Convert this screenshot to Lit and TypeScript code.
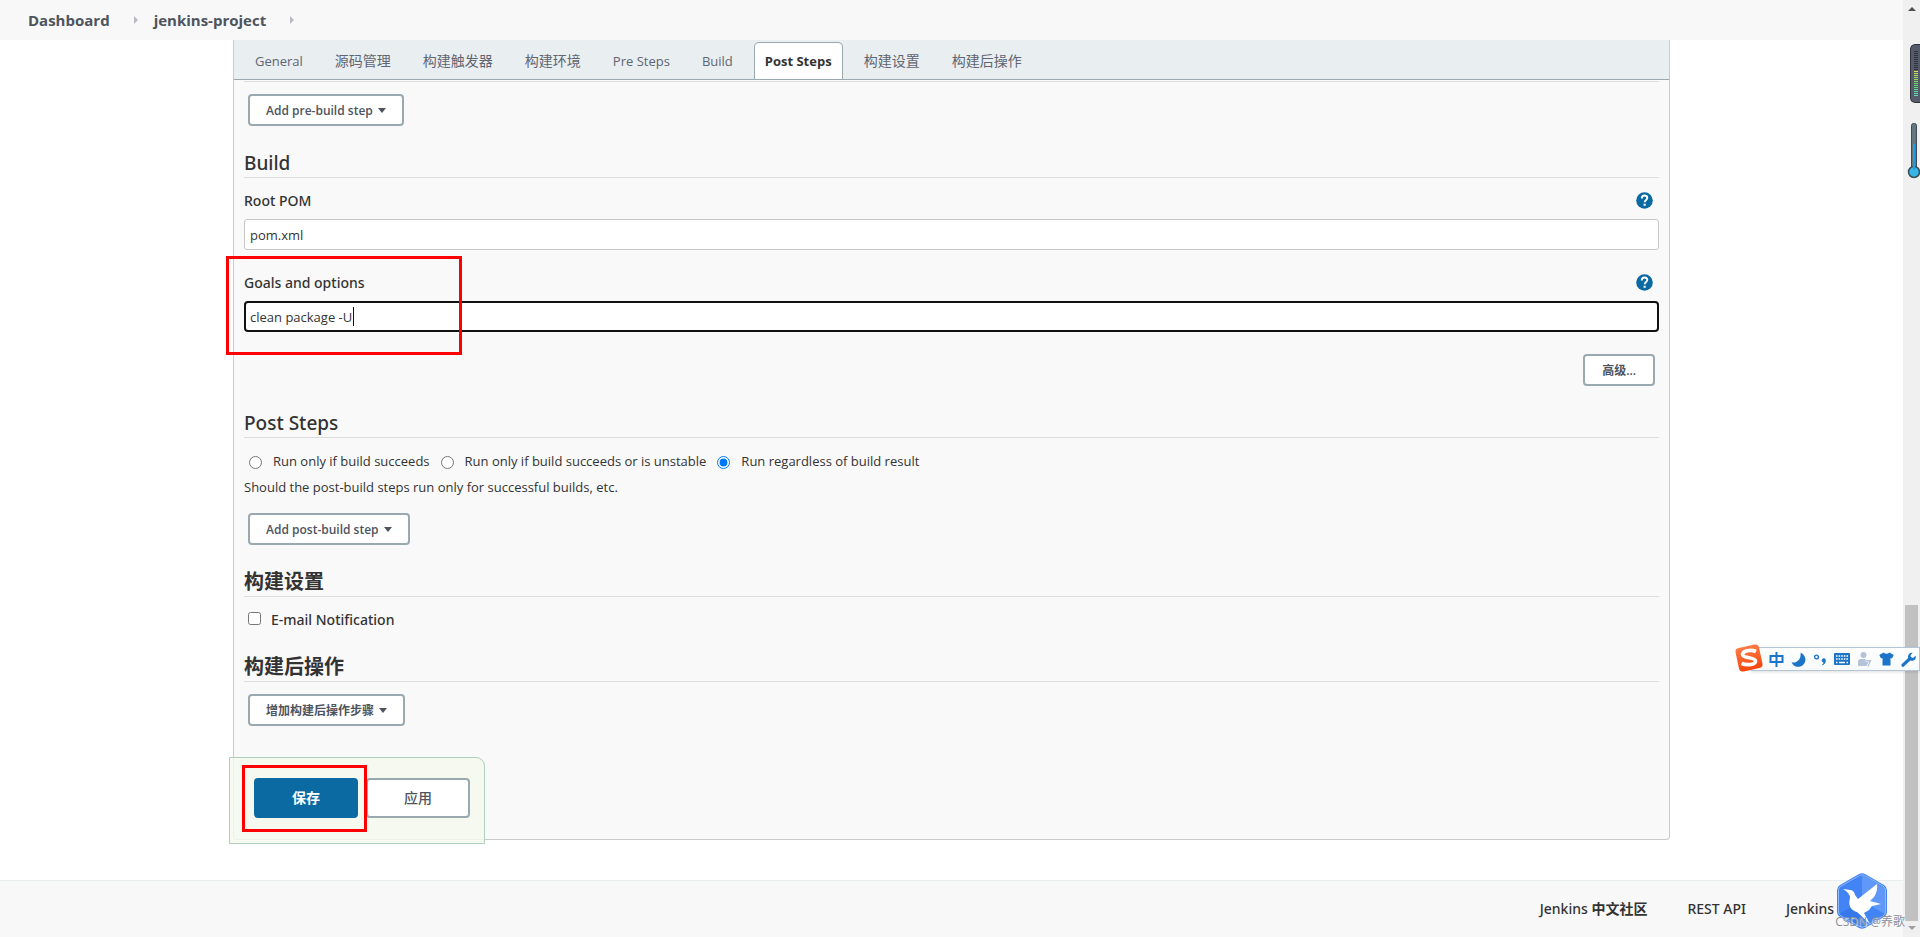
import { LitElement, html, css, svg } from "lit";
import { customElement } from "lit/decorators.js";

const caret = html`<svg class="caret" viewBox="0 0 8 5" width="8" height="5" aria-hidden="true"><path d="M0 0h8L4 5z" fill="currentColor" /></svg>`;

@customElement("help-button")
class HelpButton extends LitElement {
  static properties = { topic: {} };
  declare topic: string;
  static styles = css`
    :host { display: block; height: 18px; }
    button { display: block; border: 0; padding: 0; background: none; cursor: pointer; }
    svg { display: block; }
  `;
  render() {
    return html`<button type="button" aria-label="Help for ${this.topic}">
      <svg width="17" height="17" viewBox="0 0 17 17">
        <circle cx="8.5" cy="8.5" r="8.3" fill="#0b6aa2" />
        <path d="M5.8 6.4C5.8 4.5 6.9 3.5 8.5 3.5S11.300 4.500 11.300 6.100c0 1.900-2.600 2-2.600 4.200" fill="none" stroke="#fff" stroke-width="1.900" />
        <rect x="7.600" y="11.700" width="2.100" height="2.100" fill="#fff" />
      </svg>
    </button>`;
  }
}

@customElement("ime-toolbar")
class ImeToolbar extends LitElement {
  static styles = css`
    :host { display: block; }
    .bar {
      display: flex; align-items: center; height: 22px; margin: 11px 0 0 16px; padding: 0 0 0 17px;
      border: 1px solid #b4c5d6; background: linear-gradient(#fff, #f7fafc); box-shadow: 0 1px 3px #0002;
      gap: 7px;
    }
    .bar svg { display: block; flex: none; }
    .logo { position: absolute; left: -1px; top: 7px; }
  `;
  render() {
    return html`
      <div class="bar">
        <svg width="15" height="15" viewBox="0 0 15 15" fill="none" stroke="#1b74c8" stroke-width="2"><path d="M1.5 4h12v6h-12zM7.5 0v15" /></svg>
        <svg width="15" height="15" viewBox="0 0 15 15"><path d="M9.5.8a7.200 7.200 0 1 1-9 9.500C5.500 11.500 10.500 7.500 9.500.8z" fill="#1b74c8" /></svg>
        <svg width="14" height="15" viewBox="0 0 14 15"><circle cx="3.500" cy="5" r="1.900" fill="none" stroke="#1b74c8" stroke-width="1.400" /><path d="M10.500 6.500a2 2 0 0 1 2 2.200c0 2.200-1.300 3.600-3.300 4.300 1-.9 1.500-1.600 1.500-2.600a2 2 0 0 1-.2-3.900z" fill="#1b74c8" stroke="#1b74c8" stroke-width=".6" /></svg>
        <svg width="16" height="12" viewBox="0 0 16 12"><rect width="16" height="12" rx="1" fill="#1b74c8" /><path d="M2 3h12M2 6h12" stroke="#fff" stroke-width="1.600" stroke-dasharray="1.600 1" /><path d="M2 9.500h1.500M5 9.500h6M12.500 9.500h1.500" stroke="#fff" stroke-width="1.400" /></svg>
        <svg width="15" height="15" viewBox="0 0 15 15"><circle cx="6.500" cy="3" r="3" fill="#b5c2d8" /><path d="M1 14V9.500Q1 7 4 7h5q2.500 0 3 2.500V14z" fill="#b5c2d8" /><path d="M8.500 8.500H14L11 14.500" fill="none" stroke="#fff" stroke-width="3" /><path d="M8.500 8.800H13.500L11 14.500" fill="none" stroke="#b5c2d8" stroke-width="1.400" /></svg>
        <svg width="15" height="14" viewBox="0 0 15 14"><path d="M4.500.5Q7.500 3 10.500.5L14.700 3 13 6.500l-1.500-.6V13.500h-8V5.900L2 6.500.3 3z" fill="#1b74c8" /></svg>
        <svg width="15" height="15" viewBox="0 0 15 15"><path d="M2 13.200 8.500 7" stroke="#1b74c8" stroke-width="3.200" stroke-linecap="round" /><path d="M11.800.8a4 4 0 0 0-4.500 5.500 4 4 0 0 0 6.700 1.200 4 4 0 0 0 .5-3.700L12 6 9.800 5 9.600 3z" fill="#1b74c8" /></svg>
      </div>
      <svg class="logo" width="30" height="30" viewBox="0 0 30 30">
        <defs><linearGradient id="o" x2="0" y2="1"><stop stop-color="#ff7b45" /><stop offset="1" stop-color="#f4450c" /></linearGradient></defs>
        <rect x="3" y="3" width="24" height="24" rx="4" fill="url(#o)" transform="rotate(-12 15 15)" />
        <path d="M22 8.500C16.500 6 8.500 8 8.500 11.500c0 4 13 2.500 13 6.500 0 4-8.500 4.500-14 2.500" fill="none" stroke="#fff" stroke-width="3.600" />
      </svg>`;
  }
}

@customElement("side-gadgets")
class SideGadgets extends LitElement {
  static styles = css`
    :host { display: block; }
    svg { display: block; overflow: visible; }
  `;
  render() {
    const levels = Array.from({ length: 23 }, (_, i) => i);
    return html`<svg width="10" height="136" viewBox="0 0 10 136" aria-hidden="true">
      <path d="M12 .5H4.500Q.5 1 .5 5v49q0 4 4 4.500H12z" fill="#565b6c" stroke="#30343d" />
      ${levels.map((i) => svg`<rect x="4" y=${7 + i * 2} width="4" height="1" fill=${i < 10 ? "#2f323d" : `hsl(${60 + (i - 10) * 9} 65% 62%)`} />`)}
      <rect x="1.500" y="79.500" width="5" height="47" rx="2" fill="#64777f" stroke="#3c4b54" />
      <circle cx="4" cy="128" r="5.500" fill="#35b6e6" stroke="#3c4b54" stroke-width="1.500" />
      <path d="M4 100v26" stroke="#249be0" stroke-width="2" />
    </svg>`;
  }
}

@customElement("app-root")
class AppRoot extends LitElement {
  static styles = css`
    :host {
      display: grid; grid-template-columns: minmax(0, 1fr) 17px; position: relative;
      min-height: 100vh; overflow: hidden; background: #fff; color: #333;
      font: 13px/20px "Open Sans", "Noto Sans CJK SC", sans-serif;
    }
    * { box-sizing: border-box; }
    button, input { font: inherit; color: inherit; margin: 0; }
    a { color: inherit; text-decoration: none; }
    .page { display: flex; flex-direction: column; min-height: 100vh; }
    .crumbs { display: flex; align-items: center; height: 40px; padding: 0 28px; background: #f8f8f8; font-size: 15px; font-weight: 700; color: #4d545d; }
    .crumbs svg { display: block; margin: 0 16px 0 24px; }
    .panel {
      display: flex; flex-direction: column; position: relative; flex: none;
      width: calc(100% - 466px); margin: 0 auto; background: #f9f9f9;
      border: 1px solid #c8cacb; border-top: 0; border-radius: 0 0 4px 4px;
    }
    .tabs { display: flex; gap: 10px; height: 40px; padding: 2px 10px 0; background: #e9eef1; border-bottom: 1px solid #9aa8b0; }
    .tab { padding: 0 10px; border: 1px solid transparent; border-bottom: 0; border-radius: 5px 5px 0 0; background: none; color: #5f6672; }
    .tab.zh { font-size: 14px; }
    .tab.active { background: #fff; border-color: #9aa8b0; color: #333; font-weight: 700; }
    .form { display: flex; flex-direction: column; padding: 1px 10px 113px; }
    hr { width: 100%; height: 1px; margin: 0; border: 0; background: #ddd; }
    h2, .field, .check, footer { font-family: "Noto Sans", "Noto Sans CJK SC", sans-serif; font-weight: 500; }
    h2 { margin: 0; padding-bottom: 2px; border-bottom: 1px solid #ddd; font-size: 19px; line-height: 24px; }
    h2.zh { font-size: 20px; font-weight: 700; }
    .btn {
      display: flex; align-items: center; justify-content: center; align-self: flex-start; gap: 5px;
      height: 32px; margin: 12px 4px 0; padding: 1px 16px 0; border: 2px solid #9aa8b0; border-radius: 4px;
      background: #fff; color: #4d545d; font-size: 12px; font-weight: 600; white-space: nowrap;
    }
    .btn.end { align-self: flex-end; margin-top: 22px; padding: 1px 17px 0; }
    .hint { margin-bottom: 4px; }
    .section { margin-top: 25px; }
    .field { display: flex; align-items: center; justify-content: space-between; margin-top: 13px; padding-right: 6px; height: 20px; font-size: 14px; }
    .field.next { margin-top: 23px; }
    .text { width: 100%; height: 31px; margin-top: 8px; padding: 0 5px; border: 1px solid #c8c8c8; border-radius: 3px; background: #fff; outline: 0; }
    .text.focus { border: 2px solid #111; border-radius: 4px; padding: 0 4px; }
    .radios { display: flex; align-items: center; gap: 11px; height: 20px; margin: 13px 0 6px 5px; }
    .radios label, .check { display: flex; align-items: center; gap: 11px; }
    .radios input, .check input { width: 13px; height: 13px; }
    .radios input { margin-top: 2px; }
    .check { margin: 13px 0 0 4px; gap: 10px; font-size: 14px; }
    .check input { margin-bottom: 3px; }
    .actions {
      position: absolute; left: -5px; bottom: -5px; display: flex; gap: 8px; padding: 20px 14px 25px 24px;
      background: #f5f9efd9; border: 1px solid #b0cfbd; border-radius: 0 9px 0 0;
    }
    .actions button { width: 104px; height: 40px; border: 2px solid #9aa8b0; border-radius: 4px; background: #fff; color: #4d545d; font-size: 14px; font-weight: 500; }
    .actions .save { border-color: #0b6aa2; background: #0b6aa2; color: #fff; font-weight: 700; }
    .mark { position: absolute; border: 3px solid #f00; pointer-events: none; }
    .goals { position: relative; }
    .goals .mark { left: -18px; top: 6px; width: 236px; height: 99px; }
    .actions .mark { left: 12px; top: 7px; width: 125px; height: 67px; }
    footer { display: flex; align-items: center; justify-content: flex-end; gap: 40px; flex: 1; margin-top: 40px; padding-right: 69px; background: #f8f8f8; border-top: 1px solid #e9eef1; font-size: 14px; }
    .scroll { display: flex; flex-direction: column; align-items: center; background: #f0f0f0; padding: 7px 0; }
    .scroll svg { display: block; }
    .thumb { width: 13px; height: 316px; margin: auto 0 5px; background: #c1c1c1; }
    .caret-line { position: absolute; left: 109px; top: 57px; width: 1px; height: 19px; background: #111; }
    ime-toolbar { position: absolute; right: 0; top: 636px; width: 185px; }
    side-gadgets { position: absolute; right: 0; top: 44px; }
    .bird { position: absolute; right: 33px; bottom: 8px; }
    .water { position: absolute; right: 15px; bottom: 5px; font-size: 12px; color: #8a8f98; text-shadow: 1px 1px 1px #fffc; }
  `;

  render() {
    const arrow = html`<svg width="4" height="8" viewBox="0 0 4 8" aria-hidden="true"><path d="M0 0l4 4-4 4z" fill="#b8bcc0" /></svg>`;
    const tabs = ["General", "源码管理", "构建触发器", "构建环境", "Pre Steps", "Build", "Post Steps", "构建设置", "构建后操作"];
    const radios = ["Run only if build succeeds", "Run only if build succeeds or is unstable", "Run regardless of build result"];
    const tabClass = (t: string) => (t === "Post Steps" ? "tab active" : /^[A-Z]/.test(t) ? "tab" : "tab zh");
    return html`
      <div class="page">
        <nav class="crumbs"><a href="#">Dashboard</a>${arrow}<a href="#">jenkins-project</a>${arrow}</nav>
        <main class="panel">
          <div class="tabs" role="tablist">
            ${tabs.map((t) => html`<button type="button" role="tab" class=${tabClass(t)}>${t}</button>`)}
          </div>
          <form class="form">
            <hr />
            <button type="button" class="btn">Add pre-build step ${caret}</button>
            <h2 class="section">Build</h2>
            <div class="field"><label for="pom">Root POM</label><help-button topic="Root POM"></help-button></div>
            <input class="text" id="pom" type="text" .value=${"pom.xml"} />
            <div class="goals">
              <div class="field next"><label for="goals">Goals and options</label><help-button topic="Goals and options"></help-button></div>
              <input class="text focus" id="goals" type="text" .value=${"clean package -U"} />
              <span class="caret-line"></span>
              <span class="mark"></span>
            </div>
            <button type="button" class="btn end">高级...</button>
            <h2 class="section">Post Steps</h2>
            <div class="radios">
              ${radios.map((r, i) => html`<label><input type="radio" name="run" ?checked=${i === 2} />${r}</label>`)}
            </div>
            <div class="hint">Should the post-build steps run only for successful builds, etc.</div>
            <button type="button" class="btn">Add post-build step ${caret}</button>
            <h2 class="section zh">构建设置</h2>
            <label class="check"><input type="checkbox" />E-mail Notification</label>
            <h2 class="section zh">构建后操作</h2>
            <button type="button" class="btn">增加构建后操作步骤 ${caret}</button>
          </form>
          <div class="actions">
            <button type="button" class="save">保存</button>
            <button type="button">应用</button>
            <span class="mark"></span>
          </div>
        </main>
        <footer><a href="#">Jenkins <b>中文社区</b></a><a href="#">REST API</a><a href="#">Jenkins</a></footer>
      </div>
      <div class="scroll">
        <svg width="8" height="4" viewBox="0 0 8 4"><path d="M0 4h8L4 0z" fill="#505050" /></svg>
        <div class="thumb"></div>
        <svg width="8" height="4" viewBox="0 0 8 4"><path d="M0 0h8L4 4z" fill="#a0a0a0" /></svg>
      </div>
      <side-gadgets></side-gadgets>
      <ime-toolbar></ime-toolbar>
      <svg class="bird" width="50" height="56" viewBox="0 0 50 56" aria-hidden="true">
        <path d="M22 1q3-1.500 6 0l19 11q3 2 3 5v22q0 3-3 5L28 55q-3 1.500-6 0L3 44q-3-2-3-5V17q0-3 3-5z" fill="#4284f5" />
        <path d="M25 2v26L48 15zM25 28l23 13V15z" fill="#5f98f8" />
        <path d="M25 28 2 41l23 13z" fill="#3678ea" />
        <path d="M22.500 2.500q2.500-1.500 5 0l18.500 10.500q2.500 1.500 2.500 4v22q0 2.500-2.500 4L27.500 53.500q-2.500 1.500-5 0L4 43q-2.500-1.500-2.500-4V17q0-2.500 2.500-4z" fill="none" stroke="#8fb8ff" />
        <path d="M6 16l7 1q4 0 5 5l3 4L40 11q1 7-3 13l-4 4 11 3-9 2-3 4-5 3 6 11-13-12Q10 36 13 25q0-5-7-9z" fill="#fff" />
      </svg>
      <span class="water">CSDN @养歌</span>
    `;
  }
}
